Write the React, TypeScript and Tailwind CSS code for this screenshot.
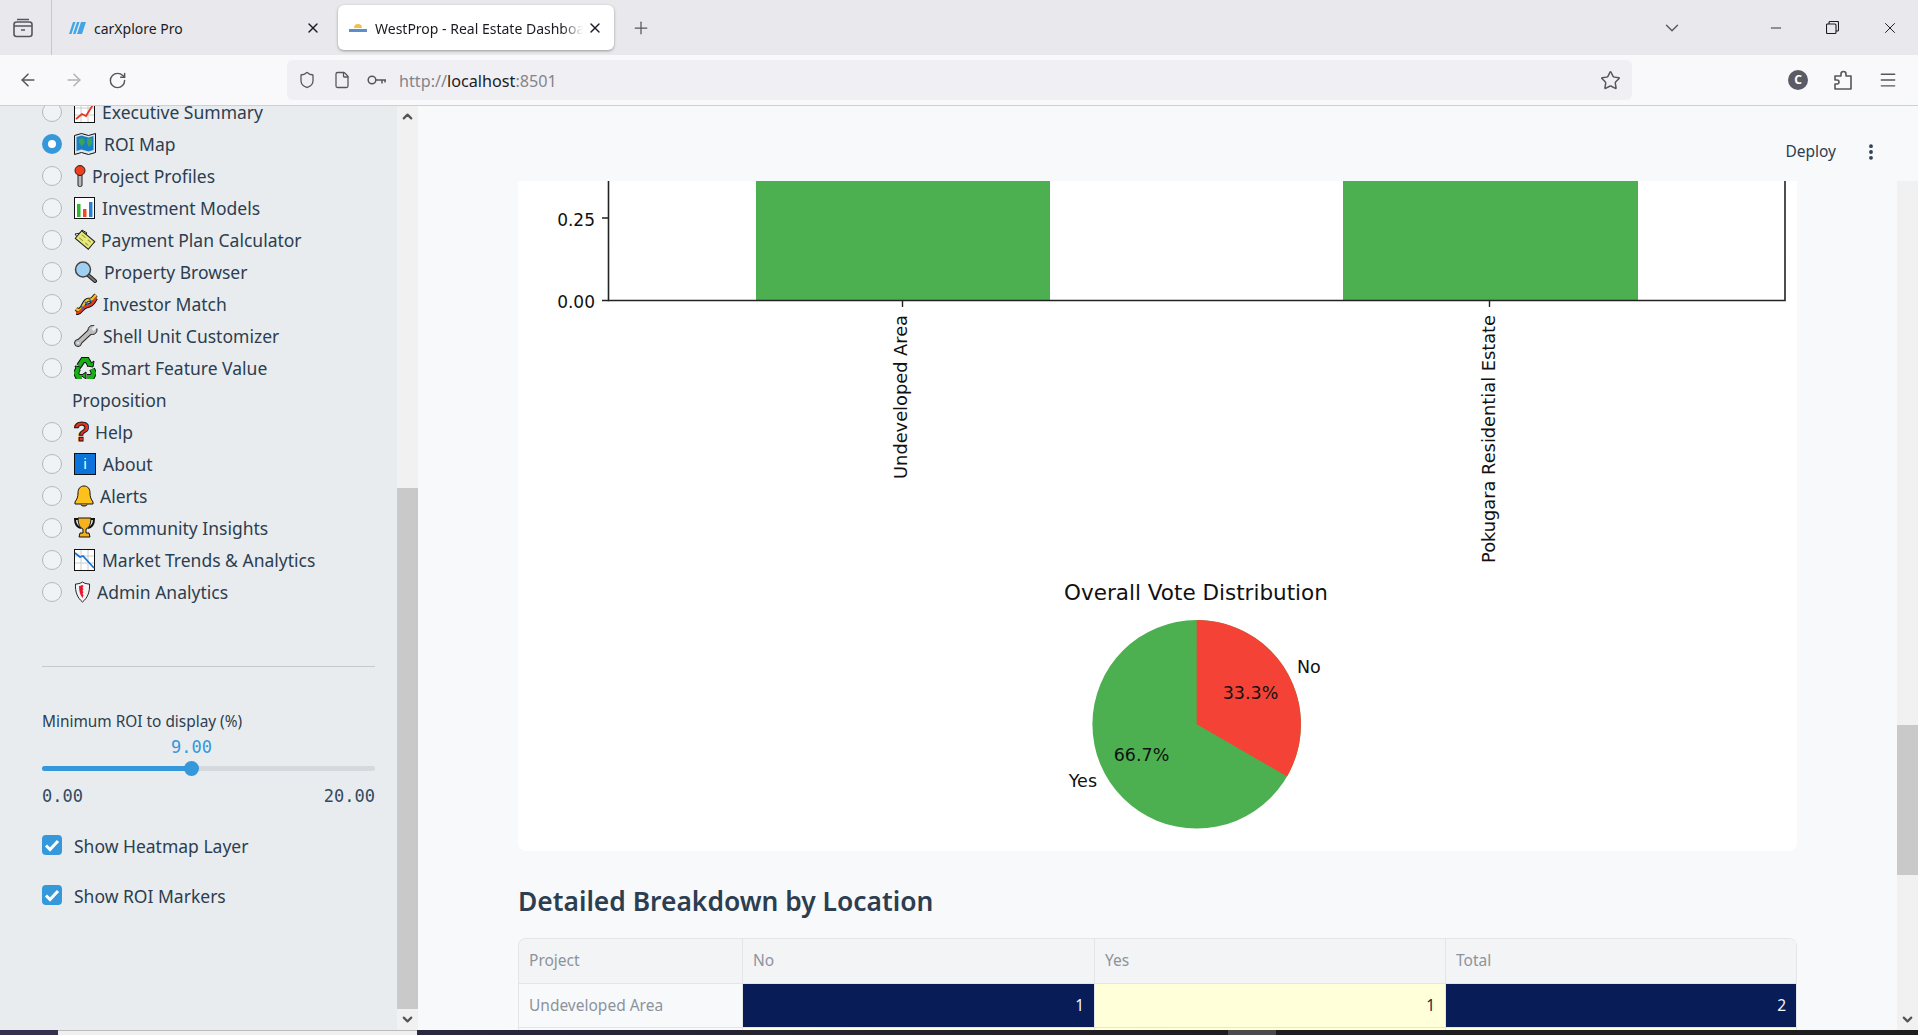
import { ArrowLeft, ArrowRight, ChevronDown, ChevronUp, EllipsisVertical, File, Menu, Minus, Plus, RotateCw, Shield, Star, X } from 'lucide-react';
import type { ReactNode } from 'react';

const Svg = ({ w = 22, children }: { w?: number; children: ReactNode }) => (
  <svg width={w} height="22" viewBox={`0 0 ${w} 22`} className="shrink-0">
    {children}
  </svg>
);

const ChartUp = () => (
  <Svg>
    <rect x="0.5" y="0.5" width="20" height="21" fill="#fff" stroke="#111" />
    <path d="M7 1v20M14 1v20M1 7h19M1 14h19" stroke="#ccc" />
    <path d="M2 18l6-5 4 2 8-13" fill="none" stroke="#e8381f" strokeWidth="1.8" />
  </Svg>
);
const ChartDown = () => (
  <Svg>
    <rect x="0.5" y="0.5" width="20" height="21" fill="#fff" stroke="#111" />
    <path d="M7 1v20M14 1v20M1 7h19M1 14h19" stroke="#ccc" />
    <path d="M1 4l5 4 3-1 11 12" fill="none" stroke="#1a73d0" strokeWidth="1.8" />
  </Svg>
);
const MapIcon = () => (
  <Svg>
    <path d="M0.500 2.500l7-2 7 2 7-2v19l-7 2-7-2-7 2z" fill="#dfe7ee" stroke="#111" />
    <path d="M2.500 4l5-1.500 7 2 5-1.500v14l-5 1.500-7-2-5 1.500z" fill="#1a7fc4" />
    <path d="M5 6l4-1 2 4-3 4-3-3zM13 6l5-1v6l-3 3-2-4z" fill="#3aa655" />
  </Svg>
);
const Pin = () => (
  <Svg w={12}>
    <rect x="4" y="9" width="4" height="12.500" rx="1.500" fill="#b9b9b9" stroke="#222" />
    <circle cx="6" cy="5.500" r="5" fill="#ef3e1d" stroke="#222" />
  </Svg>
);
const Bars = () => (
  <Svg>
    <rect x="0.5" y="0.5" width="20" height="21" fill="#fff" stroke="#111" />
    <rect x="3" y="7" width="3.5" height="13" fill="#2fb52f" />
    <rect x="9" y="12" width="3.5" height="8" fill="#ef4a23" />
    <rect x="15" y="5" width="3.5" height="15" fill="#2a7fd5" />
  </Svg>
);
const MoneyWings = () => (
  <Svg>
    <path d="M1 5l6-1 1-3 5 3-7 8z" fill="#fff" stroke="#222" />
    <path d="M21 13l-6 1-1 4-3-2 5-6z" fill="#fff" stroke="#222" />
    <g transform="rotate(40 11 11)">
      <rect x="2.500" y="6" width="17" height="10" fill="#e7ea7a" stroke="#222" />
      <path d="M5 9h5M5 13h5M13 9h4M13 13h4" stroke="#9a9f34" />
    </g>
  </Svg>
);
const Magnifier = () => (
  <Svg w={24}>
    <path d="M14 14l7 6" stroke="#222" strokeWidth="4" strokeLinecap="round" />
    <path d="M14 14l7 6" stroke="#777" strokeWidth="2" strokeLinecap="round" />
    <circle cx="9" cy="8.500" r="7.500" fill="#9fd0f2" stroke="#444" strokeWidth="1.500" />
  </Svg>
);
const Dna = () => (
  <Svg w={24}>
    <path d="M2 16c7 5 7-9 12-9s4-1 8-5" fill="none" stroke="#111" strokeWidth="4.500" />
    <path d="M2 20c6 0 5-6 11-7s6-4 9-8" fill="none" stroke="#111" strokeWidth="4.500" />
    <path d="M2 16c7 5 7-9 12-9s4-1 8-5" fill="none" stroke="#f2c21f" strokeWidth="2.500" />
    <path d="M2 20c6 0 5-6 11-7s6-4 9-8" fill="none" stroke="#e23b22" strokeWidth="2.500" />
    <path d="M11 9l3 3M7 13l3 3M15 6l3 3" stroke="#1b6fd0" strokeWidth="1.500" />
  </Svg>
);
const Wrench = () => (
  <Svg w={24}>
    <path d="M4 18L18 5" stroke="#222" strokeWidth="6" strokeLinecap="round" />
    <circle cx="18.500" cy="5" r="4.500" fill="#bcbcbc" stroke="#222" />
    <circle cx="4" cy="18" r="3.500" fill="#bcbcbc" stroke="#222" />
    <path d="M4 18L18 5" stroke="#bcbcbc" strokeWidth="4" />
    <path d="M18.500 5L23 0.500" stroke="#e9ecef" strokeWidth="3.500" />
    <circle cx="4" cy="18" r="1" fill="#e9ecef" />
  </Svg>
);
const RecycleIcon = () => {
  const arms = 'M5 9l4-6h4l3 5M18 12l2 4-2 4h-5M8 20H4l-2-4 2-4';
  return (
    <Svg>
      <path d={arms} fill="none" stroke="#111" strokeWidth="6" />
      <path d="M13 9l6 1 1-6zM12 15v7l-5-3.500zM1 9l6 1-3 6z" fill="#17b117" stroke="#111" />
      <path d={arms} fill="none" stroke="#17b117" strokeWidth="4" />
    </Svg>
  );
};
const Question = () => (
  <Svg w={15}>
    <text x="7.500" y="20" textAnchor="middle" fontSize="28" fontWeight="700" fill="#e9361a" stroke="#111" strokeWidth="1" className="font-['Liberation_Sans']">?</text>
  </Svg>
);
const Info = () => (
  <Svg>
    <rect x="0.500" y="0.500" width="21" height="21" fill="#0a74da" stroke="#111" />
    <text x="11" y="16" textAnchor="middle" fontSize="14" fill="#fff" className="font-['Liberation_Sans']">i</text>
  </Svg>
);
const Bell = () => (
  <Svg w={20}>
    <path d="M10 1c4 0 6 3 6 7 0 4 1 6 3 9v2H1v-2c2-3 3-5 3-9 0-4 2-7 6-7z" fill="#fcc21b" stroke="#111" />
    <path d="M7 19.500c0 2 6 2 6 0" fill="#d98f00" stroke="#111" />
  </Svg>
);
const Trophy = () => (
  <Svg>
    <path d="M5 2H1c0 5 2 8 6 9M16 2h4c0 5-2 8-6 9" fill="none" stroke="#111" strokeWidth="2" />
    <path d="M4 1h13c0 6-2 10-5 11v4h3l1 4H5l1-4h3v-4C6 11 4 7 4 1z" fill="#f5b21c" stroke="#111" />
  </Svg>
);
const ShieldIcon = () => (
  <Svg w={17}>
    <path d="M8.500 1c2 1.500 5 2 7 2 .5 8-2 14-7 18C3.500 17 1 11 1.500 3c2 0 5-.5 7-2z" fill="#f2f2f2" stroke="#222" />
    <path d="M8.500 4C7 4.500 6 5 5 5c0 5 1 9 3.500 12l1-3-1-1 1-2-1-1 1-2-1-1 1-2z" fill="#e5172f" />
  </Svg>
);

const pages = [
  { icon: <ChartUp />, label: 'Executive Summary', w: 28 },
  { icon: <MapIcon />, label: 'ROI Map', w: 30, on: true },
  { icon: <Pin />, label: 'Project Profiles', w: 18 },
  { icon: <Bars />, label: 'Investment Models', w: 28 },
  { icon: <MoneyWings />, label: 'Payment Plan Calculator', w: 27 },
  { icon: <Magnifier />, label: 'Property Browser', w: 30 },
  { icon: <Dna />, label: 'Investor Match', w: 29 },
  { icon: <Wrench />, label: 'Shell Unit Customizer', w: 29 },
  { icon: <RecycleIcon />, label: 'Smart Feature Value', w: 27, extra: 'Proposition' },
  { icon: <Question />, label: 'Help', w: 21 },
  { icon: <Info />, label: 'About', w: 29 },
  { icon: <Bell />, label: 'Alerts', w: 26 },
  { icon: <Trophy />, label: 'Community Insights', w: 28 },
  { icon: <ChartDown />, label: 'Market Trends & Analytics', w: 28 },
  { icon: <ShieldIcon />, label: 'Admin Analytics', w: 23 },
];

const rows = [
  { name: 'Undeveloped Area', no: 1, yes: 1, total: 2, noHi: true, totalHi: true },
  { name: 'Pokugara Residential Estate', no: 0, yes: 1, total: 1 },
];

function Checkbox({ label }: { label: string }) {
  return (
    <div className="flex h-5 items-center gap-3">
      <div className="flex h-5 w-5 items-center justify-center rounded-[4px] bg-[#3498db]">
        <svg width="16" height="16" viewBox="0 0 16 16">
          <path d="M2 8.500l4 4L14 4" fill="none" stroke="#fff" strokeWidth="3" />
        </svg>
      </div>
      <span className="mt-[2px] text-[17.500px] leading-5">{label}</span>
    </div>
  );
}

function Sidebar() {
  return (
    <aside className="h-full w-[397px] shrink-0 overflow-hidden bg-[#e9ecef] pl-[42px] pr-[22px] text-[#2c3e50]">
      <div className="-mt-[10px]">
        {pages.map((p) => (
          <div key={p.label}>
            <div className="flex h-8 items-center">
              {p.on ? (
                <div className="flex h-5 w-5 items-center justify-center rounded-full bg-[#3498db]">
                  <div className="h-2 w-2 rounded-full bg-white" />
                </div>
              ) : (
                <div className="h-5 w-5 rounded-full border-[1.500px] border-[#b4b9bf] bg-[#f0f2f6]" />
              )}
              <div className="ml-3 flex items-center" style={{ width: p.w }}>
                {p.icon}
              </div>
              <span className="text-[17.500px] whitespace-nowrap">{p.label}</span>
            </div>
            {p.extra && <div className="flex h-8 items-center pl-[30px] text-[17.500px]">{p.extra}</div>}
          </div>
        ))}
      </div>
      <div className="mt-[58px] border-t border-[#c6cacd]" />
      <div className="mt-[43px] flex h-6 items-center text-[15.400px]">Minimum ROI to display (%)</div>
      <div className="mt-[3px] h-5 pl-[129px] font-['DejaVu_Sans_Mono',monospace] text-[17px] leading-5 text-[#3498db]">9.00</div>
      <div className="relative mt-1 flex h-[15px] items-center">
        <div className="h-[5px] w-full rounded-full bg-[#d5d8dc]">
          <div className="h-full w-[45%] rounded-full bg-[#3498db]" />
        </div>
        <div className="absolute left-[142px] top-0 h-[15px] w-[15px] rounded-full bg-[#3498db]" />
      </div>
      <div className="mt-[10px] flex h-5 justify-between font-['DejaVu_Sans_Mono',monospace] text-[17px] leading-5 text-[#34495e]">
        <span>0.00</span>
        <span>20.00</span>
      </div>
      <div className="mt-[29px]">
        <Checkbox label="Show Heatmap Layer" />
      </div>
      <div className="mt-[30px]">
        <Checkbox label="Show ROI Markers" />
      </div>
    </aside>
  );
}

function VoteChart() {
  return (
    <svg viewBox="518 181 1279 670" className="block h-[670px] w-[1279px] font-['DejaVu_Sans',sans-serif]" fill="#111">
      <rect x="756" y="181" width="294" height="119" fill="#4caf50" />
      <rect x="1343" y="181" width="295" height="119" fill="#4caf50" />
      <path d="M608.500 181V300.500H1785V181" fill="none" stroke="#222" strokeWidth="1.600" />
      <path d="M602 218h7M602 300.500h7M902.500 300v7M1489.500 300v7" stroke="#222" strokeWidth="1.400" />
      <text x="595" y="226" textAnchor="end" fontSize="17">0.25</text>
      <text x="595" y="308" textAnchor="end" fontSize="17">0.00</text>
      <text transform="translate(907,315) rotate(-90)" textAnchor="end" fontSize="17.800">Undeveloped Area</text>
      <text transform="translate(1495,315) rotate(-90)" textAnchor="end" fontSize="17.800">Pokugara Residential Estate</text>

      <text x="1196" y="599.500" textAnchor="middle" fontSize="21.500">Overall Vote Distribution</text>
      <circle cx="1196.700" cy="724.300" r="104.300" fill="#4caf50" />
      <path d="M1196.700 724.300V620A104.300 104.300 0 0 1 1287 776.400z" fill="#f44336" />
      <text x="1250.500" y="699" textAnchor="middle" fontSize="17.500">33.3%</text>
      <text x="1141.500" y="761" textAnchor="middle" fontSize="17.500">66.7%</text>
      <text x="1297" y="673" fontSize="17.500">No</text>
      <text x="1097" y="787" textAnchor="end" fontSize="17.500">Yes</text>
    </svg>
  );
}

function BreakdownTable() {
  const head = 'flex h-[45px] items-center border-r border-b border-[#e4e5e8] bg-[#f3f4f6] px-[10px] text-[15.500px] text-[#8c939c]';
  const num = 'flex h-11 items-center justify-end border-b border-r border-[#e4e5e8] px-[10px] text-[15.500px]';
  return (
    <div className="grid grid-cols-[224px_352px_351px_351px] overflow-hidden rounded-t-lg border-t border-l border-[#e4e5e8]">
      {['Project', 'No', 'Yes', 'Total'].map((h) => (
        <div key={h} className={head}>
          {h}
        </div>
      ))}
      {rows.map((r) => (
        <div key={r.name} className="contents">
          <div className="flex h-11 items-center overflow-hidden border-b border-r border-[#e4e5e8] px-[10px] text-[15.500px] whitespace-nowrap text-[#8c939c]">{r.name}</div>
          <div className={`${num} ${r.noHi ? 'bg-[#081d58] text-[#f4f6fb]' : 'bg-[#ffffd9] text-[#081d58]'}`}>{r.no}</div>
          <div className={`${num} bg-[#ffffd9] text-[#1d2b3a]`}>{r.yes}</div>
          <div className={`${num} ${r.totalHi ? 'bg-[#081d58] text-[#f4f6fb]' : 'bg-[#ffffd9] text-[#081d58]'}`}>{r.total}</div>
        </div>
      ))}
    </div>
  );
}

function Scrollbar({ top, thumb }: { top: number; thumb: number }) {
  return (
    <div className="flex h-full w-[21px] shrink-0 flex-col bg-[#f1f1f1]">
      <div style={{ height: top }} className="flex shrink-0 items-start justify-center pt-[3px]">
        {top === 382 && <ChevronUp size={15} strokeWidth={3.500} className="text-[#555]" />}
      </div>
      <div style={{ height: thumb }} className="shrink-0 bg-[#c9c9c9]" />
      <div className="mt-auto flex h-[21px] items-center justify-center">
        <ChevronDown size={15} strokeWidth={3.500} className="text-[#555]" />
      </div>
    </div>
  );
}

export default function App() {
  return (
    <div className="flex h-[1035px] w-[1918px] flex-col overflow-hidden bg-[#f8f9fb] font-['Noto_Sans',sans-serif]">
      {/* tab strip */}
      <div className="flex h-[55px] shrink-0 items-center bg-[#e9e9ed] text-[#1c1b22]">
        <div className="flex h-full w-[52px] items-center justify-center border-r border-[#c8c8cc] pr-[5px]">
          <svg width="20" height="20" viewBox="0 0 20 20" fill="none" stroke="#55555c" strokeWidth="1.600">
            <rect x="1" y="4" width="18" height="14.500" rx="2.500" />
            <path d="M1 8h18M4 1.500h12M8 12h4" />
          </svg>
        </div>
        <div className="flex h-full w-[286px] items-center pl-[17px] pr-[17px]">
          <svg width="17" height="12" viewBox="0 0 17 12" fill="#42a5e8" className="shrink-0">
            <path d="M4 0h2.500L2.500 12H0zM8 0h2.500L6.500 12H4zM12 0h5l-4 12H8z" />
          </svg>
          <span className="ml-[8px] mt-[2px] text-[14px]">carXplore Pro</span>
          <X size={16} strokeWidth={2} className="ml-auto" />
        </div>
        <div className="flex h-[45px] w-[276px] items-center rounded-md bg-white pl-[11px] pr-[11px] shadow-[0_1px_3px_rgba(0,0,0,0.35)]">
          <svg width="18" height="10" viewBox="0 0 18 10" className="shrink-0">
            <path d="M5 5a4 4 0 0 1 8 0z" fill="#f0c14b" />
            <rect x="0" y="6" width="18" height="3" fill="#5b8fc7" />
          </svg>
          <span className="ml-2 mt-[2px] w-[208px] overflow-hidden text-[14px] whitespace-nowrap [mask-image:linear-gradient(to_right,black_90%,transparent)]">WestProp - Real Estate Dashboard</span>
          <X size={16} strokeWidth={2} className="ml-auto shrink-0" />
        </div>
        <Plus size={20} strokeWidth={1.500} className="ml-[17px] text-[#55555c]" />
        <ChevronDown size={22} strokeWidth={1.500} className="ml-auto text-[#55555c]" />
        <div className="ml-[64px] flex h-full w-[57px] items-center justify-center">
          <Minus size={16} strokeWidth={1.300} />
        </div>
        <div className="flex h-full w-[57px] items-center justify-center">
          <svg width="13" height="13" viewBox="0 0 13 13" fill="none" stroke="#1c1b22" strokeWidth="1.100">
            <rect x="0.500" y="3" width="9.500" height="9.500" rx="1" />
            <path d="M3 3V1.500a1 1 0 0 1 1-1h7.500a1 1 0 0 1 1 1V9a1 1 0 0 1-1 1H10" />
          </svg>
        </div>
        <div className="flex h-full w-[57px] items-center justify-center">
          <X size={18} strokeWidth={1.300} />
        </div>
      </div>

      {/* toolbar */}
      <div className="flex h-[51px] shrink-0 items-center border-b border-[#cfcfd3] bg-[#f9f9fb] pl-[18px] text-[#55555c]">
        <ArrowLeft size={20} strokeWidth={1.800} />
        <ArrowRight size={20} strokeWidth={1.800} className="ml-[26px] text-[#b1b1b6]" />
        <RotateCw size={19} strokeWidth={1.800} className="ml-[24px]" />
        <div className="ml-[160px] flex h-10 w-[1345px] items-center rounded-md bg-[#f0f0f4] pl-[11px] pr-[11px]">
          <Shield size={18} strokeWidth={1.700} />
          <File size={18} strokeWidth={1.700} className="ml-[17px]" />
          <svg width="20" height="12" viewBox="0 0 20 12" fill="none" stroke="#55555c" strokeWidth="1.500" className="ml-[16px]">
            <circle cx="5" cy="6" r="3.800" />
            <path d="M9 6h10M15 6v3.500M18 6v2.500" />
          </svg>
          <span className="ml-[12px] mt-[2px] text-[16.200px] text-[#84848a]">
            http://<span className="text-[#1c1b22]">localhost</span>:8501
          </span>
          <Star size={21} strokeWidth={1.700} className="ml-auto" />
        </div>
        <div className="ml-[156px] flex h-5 w-5 items-center justify-center rounded-full bg-[#5b5b66] text-[12px] leading-none font-bold text-white">C</div>
        <svg width="18" height="20" viewBox="0 0 18 20" fill="none" stroke="#55555c" strokeWidth="1.600" strokeLinejoin="round" className="ml-[26px]">
          <path d="M1 19v-5h2a2 2 0 0 0 0-4H1V6h6V4a2.500 2.500 0 0 1 5 0v2h5v13z" />
        </svg>
        <Menu size={20} strokeWidth={1.700} className="ml-[26px]" />
      </div>

      {/* page */}
      <div className="flex min-h-0 flex-1">
        <Sidebar />
        <Scrollbar top={382} thumb={521} />
        <main className="flex min-w-0 flex-1 flex-col">
          <header className="flex h-[75px] shrink-0 items-start justify-end pt-[33px] pr-[37px] text-[#2c3e50]">
            <span className="text-[15.500px] leading-6">Deploy</span>
            <EllipsisVertical size={20} strokeWidth={2.600} className="ml-[25px] mt-[3px]" />
          </header>
          <div className="flex min-h-0 flex-1">
            <div className="min-w-0 flex-1 overflow-hidden px-[100px]">
              <div className="overflow-hidden rounded-b-lg bg-white">
                <VoteChart />
              </div>
              <h2 className="mt-[30px] mb-[17px] h-10 text-[26.400px] leading-10 font-semibold text-[#2c3e50]">Detailed Breakdown by Location</h2>
              <BreakdownTable />
            </div>
            <Scrollbar top={544} thumb={150} />
          </div>
        </main>
      </div>

      {/* strip of the window behind */}
      <div className="flex h-[5px] shrink-0">
        <div className="w-[58px] bg-[#353050]" />
        <div className="w-[359px] border-t border-[#bbbbbb] bg-[#f0f0f0]" />
        <div className="w-[811px] bg-gradient-to-r from-[#2a2740] to-[#1e1e1e]" />
        <div className="w-[48px] bg-[#4a4a4a]" />
        <div className="flex-1 bg-[#1e1e1e]" />
      </div>
    </div>
  );
}
